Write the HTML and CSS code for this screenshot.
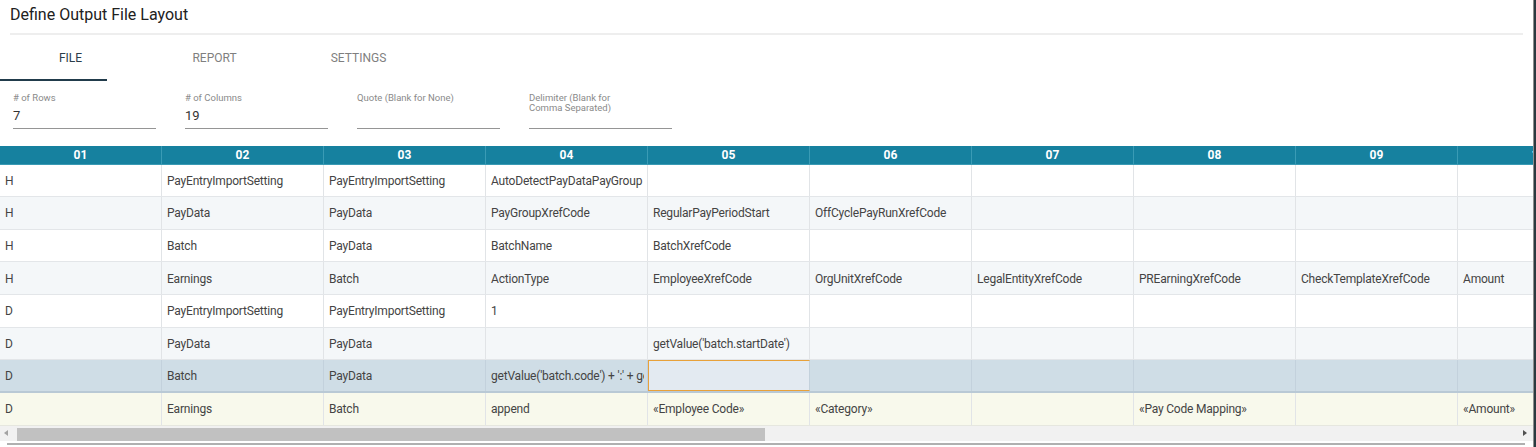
FILE: index.html
```html
<!DOCTYPE html>
<html lang="en">
<head>
<meta charset="utf-8">
<title>Define Output File Layout</title>
<link rel="stylesheet" href="styles.css">
</head>
<body>
<div class="app">
  <h1 class="title">Define Output File Layout</h1>
  <div class="rule"></div>
  <nav class="tabs">
    <div class="tab-row">
      <div class="tab active">FILE</div>
      <div class="tab">REPORT</div>
      <div class="tab">SETTINGS</div>
    </div>
    <div class="indicator"></div>
  </nav>
  <div class="fields">
    <div class="field"><div class="label"># of Rows</div><div class="value">7</div></div>
    <div class="field"><div class="label"># of Columns</div><div class="value">19</div></div>
    <div class="field"><div class="label">Quote (Blank for None)</div><div class="value"></div></div>
    <div class="field"><div class="label">Delimiter (Blank for Comma Separated)</div><div class="value"></div></div>
  </div>
  <div class="grid">
    <div class="row head">
      <div class="cell">01</div><div class="cell">02</div><div class="cell">03</div><div class="cell">04</div><div class="cell">05</div><div class="cell">06</div><div class="cell">07</div><div class="cell">08</div><div class="cell">09</div><div class="cell">10</div>
    </div>
    <div class="row">
      <div class="cell">H</div><div class="cell">PayEntryImportSetting</div><div class="cell">PayEntryImportSetting</div><div class="cell">AutoDetectPayDataPayGroup</div><div class="cell"></div><div class="cell"></div><div class="cell"></div><div class="cell"></div><div class="cell"></div><div class="cell"></div>
    </div>
    <div class="row alt">
      <div class="cell">H</div><div class="cell">PayData</div><div class="cell">PayData</div><div class="cell">PayGroupXrefCode</div><div class="cell">RegularPayPeriodStart</div><div class="cell">OffCyclePayRunXrefCode</div><div class="cell"></div><div class="cell"></div><div class="cell"></div><div class="cell"></div>
    </div>
    <div class="row">
      <div class="cell">H</div><div class="cell">Batch</div><div class="cell">PayData</div><div class="cell">BatchName</div><div class="cell">BatchXrefCode</div><div class="cell"></div><div class="cell"></div><div class="cell"></div><div class="cell"></div><div class="cell"></div>
    </div>
    <div class="row alt">
      <div class="cell">H</div><div class="cell">Earnings</div><div class="cell">Batch</div><div class="cell">ActionType</div><div class="cell">EmployeeXrefCode</div><div class="cell">OrgUnitXrefCode</div><div class="cell">LegalEntityXrefCode</div><div class="cell">PREarningXrefCode</div><div class="cell">CheckTemplateXrefCode</div><div class="cell">Amount</div>
    </div>
    <div class="row">
      <div class="cell">D</div><div class="cell">PayEntryImportSetting</div><div class="cell">PayEntryImportSetting</div><div class="cell">1</div><div class="cell"></div><div class="cell"></div><div class="cell"></div><div class="cell"></div><div class="cell"></div><div class="cell"></div>
    </div>
    <div class="row alt">
      <div class="cell">D</div><div class="cell">PayData</div><div class="cell">PayData</div><div class="cell"></div><div class="cell">getValue('batch.startDate')</div><div class="cell"></div><div class="cell"></div><div class="cell"></div><div class="cell"></div><div class="cell"></div>
    </div>
    <div class="row selected">
      <div class="cell">D</div><div class="cell">Batch</div><div class="cell">PayData</div><div class="cell clip"><span class="clip-text">getValue('batch.code') + ':' + getValue('batch.name')</span></div><div class="cell sel"></div><div class="cell"></div><div class="cell"></div><div class="cell"></div><div class="cell"></div><div class="cell"></div>
    </div>
    <div class="row new">
      <div class="cell">D</div><div class="cell">Earnings</div><div class="cell">Batch</div><div class="cell">append</div><div class="cell">«Employee Code»</div><div class="cell">«Category»</div><div class="cell"></div><div class="cell">«Pay Code Mapping»</div><div class="cell"></div><div class="cell">«Amount»</div>
    </div>
  </div>
  <div class="hscroll">
    <div class="arrow left"></div>
    <div class="track"><div class="thumb"></div></div>
    <div class="arrow right"></div>
  </div>
  <div class="bottom-line"></div>
</div>
<div class="edge"></div>
</body>
</html>
```
FILE: styles.css
```css
html, body {
  margin: 0;
  padding: 0;
  background: #ffffff;
}
body {
  display: flex;
  height: 447px;
  overflow: hidden;
  font-family: Roboto, "Liberation Sans", sans-serif;
  color: #333;
}
.app {
  width: 1533px;
  flex: none;
  overflow: hidden;
  background: #fff;
}
.edge {
  flex: 1;
  border-left: 1px solid #8e8e8e;
  background: #2a3a40;
}
.title {
  margin: 0;
  padding: 5px 0 0 10px;
  font-size: 16px;
  line-height: 20px;
  font-weight: 400;
  color: #212121;
}
.rule {
  height: 2px;
  margin: 8px 10px 0 10px;
  background: #eeeeee;
}
.tabs {
  display: flex;
  flex-direction: column;
}
.tab-row {
  display: flex;
  height: 44px;
  margin-left: -1.5px;
}
.tab {
  width: 144px;
  display: flex;
  align-items: center;
  justify-content: center;
  font-size: 12px;
  line-height: 14px;
  color: #7f7f7f;
  padding-top: 2px;
}
.tab.active {
  color: #2a3d4a;
}
.indicator {
  width: 107px;
  height: 2px;
  background: #213b4b;
}
.fields {
  display: flex;
  gap: 29px;
  padding: 11.5px 0 0 13px;
}
.field {
  width: 143px;
  display: flex;
  flex-direction: column;
  border-bottom: 1px solid #959595;
}
.label {
  font-size: 9.5px;
  line-height: 10px;
  height: 15px;
  max-width: 106px;
  color: #8a8a8a;
}
.value {
  font-size: 13px;
  line-height: 16px;
  height: 16px;
  padding-bottom: 4px;
  color: #333;
}
.grid {
  margin-top: 17px;
  width: 1533px;
  overflow: hidden;
}
.row {
  display: flex;
  height: 32.65px;
  box-sizing: border-box;
  border-bottom: 1px solid #e3e6e9;
  background: #ffffff;
}
.row.alt {
  background: #f4f7f9;
}
.row.selected {
  background: #cfdde6;
  border-bottom: 2px solid #b9c9d5;
}
.row.new {
  background: #f8f9ec;
  border-bottom: 1px solid #e6e7df;
}
.cell {
  width: 162px;
  flex: none;
  box-sizing: border-box;
  border-right: 1px solid #e1e4e7;
  padding: 1px 0 0 5px;
  display: flex;
  align-items: center;
  white-space: nowrap;
  overflow: hidden;
  font-size: 12px;
  letter-spacing: -0.2px;
  color: #444444;
}
.cell.clip {
  padding-right: 3px;
}
.clip-text {
  flex: 1;
  min-width: 0;
  overflow: hidden;
}
.row.selected .cell {
  border-right-color: #c3d1dc;
}
.cell.sel {
  border: 1px solid #e8a13a;
  background: #e3eaf1;
}
.row.head {
  height: 19px;
  background: #16819f;
  border-bottom: 1px solid #3a9ab4;
}
.row.head .cell {
  justify-content: center;
  padding: 0;
  color: #ffffff;
  font-weight: 700;
  font-size: 12px;
  letter-spacing: 0;
  border-right-color: #3a9bb5;
}
.hscroll {
  display: flex;
  height: 15px;
  background: #f1f1f1;
}
.arrow {
  flex: none;
  display: flex;
  align-items: center;
  justify-content: center;
}
.arrow.left {
  width: 12px;
}
.arrow.right {
  width: 16px;
}
.arrow.left::before {
  content: "";
  border-top: 3.5px solid transparent;
  border-bottom: 3.5px solid transparent;
  border-right: 4px solid #a3a3a3;
}
.arrow.right::before {
  content: "";
  border-top: 3.5px solid transparent;
  border-bottom: 3.5px solid transparent;
  border-left: 4px solid #505050;
}
.track {
  flex: 1;
  display: flex;
  align-items: flex-end;
  padding-left: 5px;
}
.thumb {
  width: 748px;
  height: 13px;
  background: #c1c1c1;
}
.bottom-line {
  height: 2px;
  margin: 2px 8px 0 7px;
  background: #b0b0b0;
}
```
